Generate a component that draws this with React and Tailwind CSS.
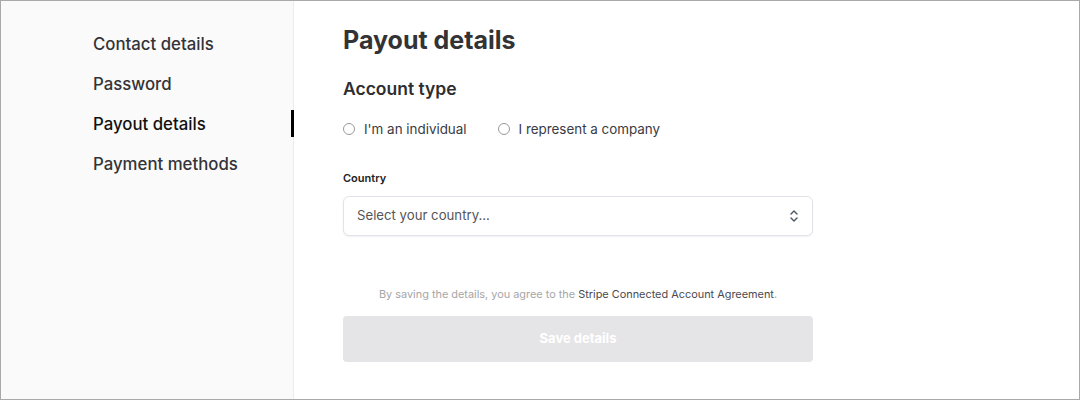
import React from "react";

function Radio({ label }) {
  return (
    <label className="flex items-center gap-[9px] cursor-pointer">
      <span className="w-[12px] h-[12px] rounded-full border-[1.5px] border-[#9a9a9a] bg-white shrink-0" />
      <span className="text-[13.4px] leading-[20px] text-[#3a3a42]">{label}</span>
    </label>
  );
}

export default function App() {
  const nav = ["Contact details", "Password", "Payout details", "Payment methods"];
  return (
    <div
      className="w-[1080px] h-[400px] border border-[#a9a9a9] flex bg-white overflow-hidden"
      style={{ fontFamily: "Inter, 'Noto Sans', sans-serif" }}
    >
      <aside className="w-[293px] shrink-0 bg-[#fafafa] border-r border-[#ececec] pt-[23px]">
        {nav.map((n) => {
          const active = n === "Payout details";
          return (
            <div key={n} className="relative h-[40px] flex items-center pl-[92px]">
              <span
                className={
                  "text-[16.8px] leading-[40px] font-medium " +
                  (active ? "text-[#111111]" : "text-[#333338]")
                }
              >
                {n}
              </span>
              {active && (
                <span className="absolute right-[-1px] top-[6px] w-[3px] h-[27px] bg-black" />
              )}
            </div>
          );
        })}
      </aside>
      <main className="flex-1 pl-[49px] pt-[23px]">
        <div className="w-[470px] flex flex-col">
          <h1 className="text-[25px] leading-[32px] font-bold text-[#333335]">Payout details</h1>
          <h2 className="mt-[19px] text-[17.5px] leading-[28px] font-semibold text-[#2e2e30]">Account type</h2>
          <div className="mt-[16px] flex items-center gap-[31px]">
            <Radio label="I'm an individual" />
            <Radio label="I represent a company" />
          </div>
          <div className="mt-[31px] text-[11px] leading-[16px] font-semibold text-[#222]">Country</div>
          <button className="mt-[10px] h-[40px] w-full rounded-[6px] border border-[#e2e3e8] bg-white shadow-[0_1px_2px_rgba(0,0,0,0.06)] flex items-center justify-between pl-[13px] pr-[13px]">
            <span className="text-[13.2px] text-[#555558]">Select your country...</span>
            <svg width="10" height="16" viewBox="0 0 10 16" fill="none" stroke="#4b5563" strokeWidth="1.4" strokeLinecap="round" strokeLinejoin="round">
              <path d="M2 6 L5 3 L8 6" />
              <path d="M2 10 L5 13 L8 10" />
            </svg>
          </button>
          <p className="mt-[50px] text-center text-[10.9px] leading-[16px] text-[#a6a6a8]">
            By saving the details, you agree to the{" "}
            <span className="text-[#4a4a4f]">Stripe Connected Account Agreement</span>.
          </p>
          <button className="mt-[14px] h-[46px] w-full rounded-[4px] bg-[#e5e5e7] text-white text-[13px] font-bold">
            Save details
          </button>
        </div>
      </main>
    </div>
  );
}
